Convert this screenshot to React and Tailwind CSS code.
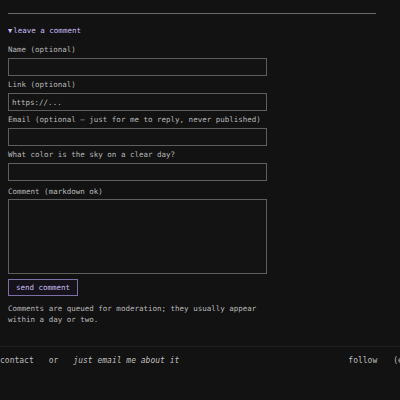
export default function App() {
  const mono = { fontFamily: '"DejaVu Sans Mono", "Liberation Mono", monospace' };
  const Field = ({ label, placeholder, mt = "mt-[4px]" }) => (
    <div className={`${mt} flex flex-col`}>
      <div className="h-[12px] leading-[12px] text-[7.5px] text-[#b8b8b8]">{label}</div>
      <input
        className="mt-[2px] h-[18px] w-[259px] border border-[#5e5e5e] bg-[#131313] px-[3px] text-[7.5px] text-[#c8c8c8] placeholder:text-[#bdbdbd] outline-none"
        style={mono}
        placeholder={placeholder}
      />
    </div>
  );
  return (
    <div className="w-[400px] h-[400px] overflow-hidden bg-[#121212] text-[#c4c4c4]" style={mono}>
      <div className="pl-[8px]">
        <div className="pt-[13px]">
          <div className="h-px w-[368px] bg-[#6a6a6a]" />
        </div>
        <div className="mt-[11px] h-[12px] leading-[12px] text-[7.5px] text-[#c9bcf5] flex items-center">
          <span className="text-[7px] mr-[1px]">▼</span>
          <span>leave a comment</span>
        </div>
        <Field label="Name (optional)" mt="mt-[7px]" />
        <Field label="Link (optional)" placeholder="https://..." mt="mt-[3px]" />
        <Field label="Email (optional — just for me to reply, never published)" mt="mt-[3px]" />
        <Field label="What color is the sky on a clear day?" mt="mt-[3px]" />
        <div className="mt-[5px] flex flex-col">
          <div className="h-[12px] leading-[12px] text-[7.5px] text-[#b8b8b8]">Comment (markdown ok)</div>
          <textarea
            className="mt-[1px] h-[75px] w-[259px] resize-none border border-[#5e5e5e] bg-[#131313] outline-none block"
            style={mono}
          />
        </div>
        <div className="mt-[5px] flex">
          <button
            className="h-[17px] w-[70px] border border-[#7d6fa8] bg-[#151219] text-[7.5px] text-[#cbbff5] leading-none"
            style={mono}
          >
            send comment
          </button>
        </div>
        <div className="mt-[7px] text-[7.5px] leading-[11px] text-[#b8b8b8]">
          <div>Comments are queued for moderation; they usually appear</div>
          <div>within a day or two.</div>
        </div>
      </div>
      <div className="mt-[21px] border-t border-[#1e1e1e] pt-[8px] flex text-[8px] leading-[12px] text-[#bdbdbd] whitespace-nowrap">
        <div className="flex gap-[15px]">
          <span>contact</span>
          <span>or</span>
          <span className="italic">just email me about it</span>
        </div>
        <div className="ml-[169px] flex gap-[16px]">
          <span>follow</span>
          <span>(email)</span>
        </div>
      </div>
    </div>
  );
}
